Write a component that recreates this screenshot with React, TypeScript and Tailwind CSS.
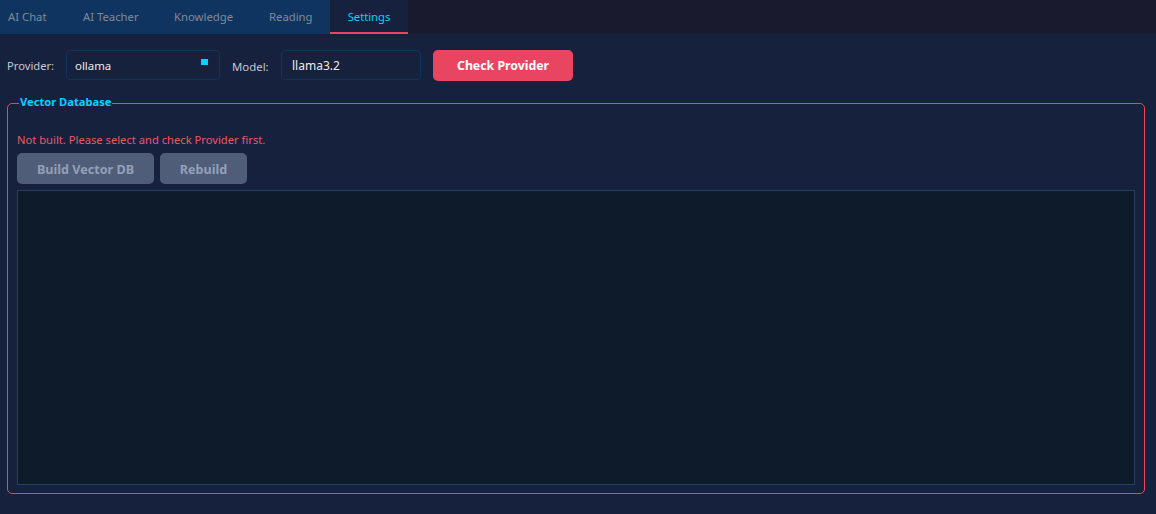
export default function App() {
  const tabs = [
    { label: "AI Chat", w: "w-[55px] pl-2" },
    { label: "AI Teacher", w: "w-[100px] pl-[28px]" },
    { label: "Knowledge", w: "w-[95px] pl-[19px]" },
    { label: "Reading", w: "w-[80px] pl-[19px]" },
  ];
  return (
    <div className="w-[1156px] h-[514px] overflow-hidden bg-[#16213e] font-['Noto_Sans','Open_Sans',sans-serif] text-[11.2px]">
      <div className="flex h-[34px] bg-[#1a1a2e]">
        <div className="flex h-[34px] bg-[#0f3460]">
          {tabs.map((t) => (
            <div key={t.label} className={`${t.w} h-[34px] pt-px flex items-center text-[#808a96] text-[11.3px]`}>
              {t.label}
            </div>
          ))}
        </div>
        <div className="w-[78px] h-[34px] bg-[#16213e] border-b-2 border-[#e94560] flex items-center justify-center text-[#00d4ff] pt-[3px]">
          Settings
        </div>
      </div>
      <div className="flex items-start pl-[7px] pt-4">
        <span className="w-[59px] h-[30px] pt-[3px] flex items-center text-[#c4c8d0]">Provider:</span>
        <div className="relative w-[154px] h-[30px] pt-px rounded-[4px] border border-[#0f3460] bg-[#16213e] flex items-center pl-2 text-[#eaeaea] text-[11.4px]">
          ollama
          <span className="absolute right-[11px] top-[8px] w-[7px] h-[6px] bg-[#00d4ff]" />
        </div>
        <span className="ml-3 w-[49px] h-[30px] pt-[3px] flex items-center text-[#c4c8d0] text-[11.4px]">Model:</span>
        <div className="w-[140px] h-[30px] pt-px rounded-[4px] border border-[#0f3460] bg-[#16213e] flex items-center pl-[10px] text-[#eaeaea] text-[12px]">
          llama3.2
        </div>
        <button className="ml-3 w-[140px] h-[31px] pt-[2px] rounded-[5px] bg-[#e94560] text-white font-bold text-[12.3px]">
          Check Provider
        </button>
      </div>
      <fieldset className="mx-[7px] mt-[14px] h-[399px] w-[1138px] rounded-[5px] border border-[#e94560] px-[9px] pt-[24px] pb-2 flex flex-col">
        <legend className="ml-[2px] px-px text-[#00d4ff] font-bold leading-[16px] text-[11.15px] -translate-y-px">Vector Database</legend>
        <div className="text-[#e85a64] leading-[16px] -mt-[3px]">Not built. Please select and check Provider first.</div>
        <div className="flex gap-[6px] mt-[5px]">
          <button className="w-[137px] h-[31px] pt-[3px] rounded-[5px] bg-[#4f5d78] text-[#94a0b8] font-bold text-[12.6px]">Build Vector DB</button>
          <button className="w-[87px] h-[31px] pt-[3px] rounded-[5px] bg-[#4f5d78] text-[#94a0b8] font-bold text-[12.6px]">Rebuild</button>
        </div>
        <div className="mt-[6px] h-[295px] bg-[#0d1b2a] border border-[#2a3f5f]" />
      </fieldset>
    </div>
  );
}
